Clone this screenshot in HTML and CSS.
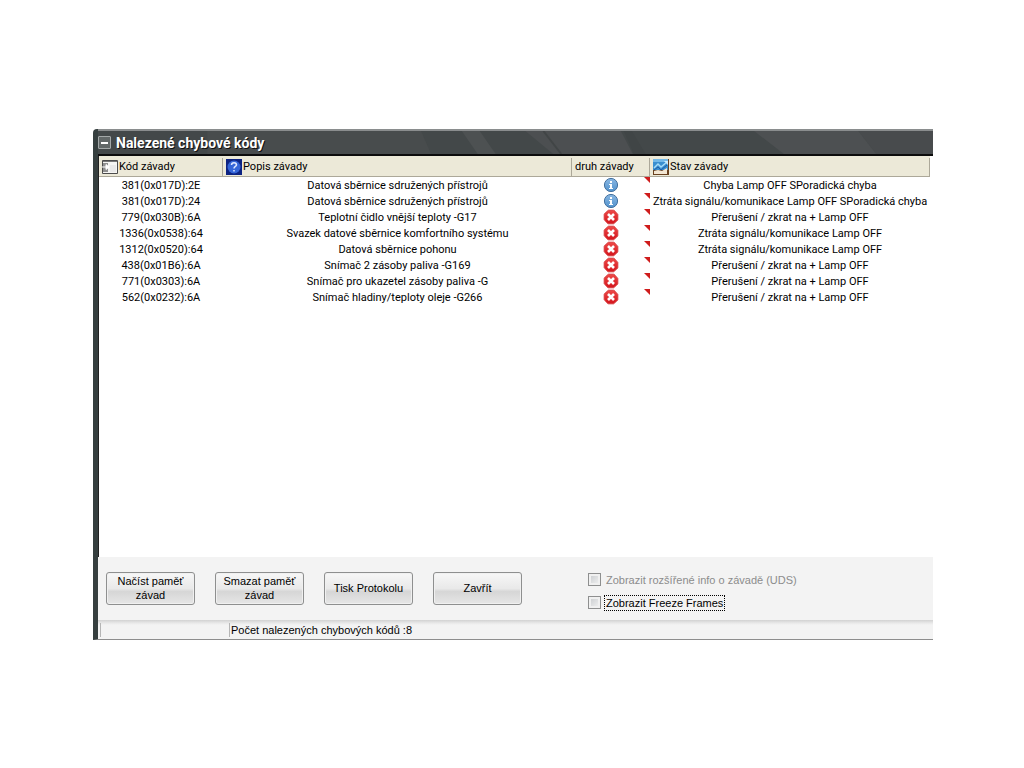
FILE: index.html
```html
<!DOCTYPE html>
<html lang="cs">
<head>
<meta charset="utf-8">
<title>Nalezené chybové kódy</title>
<link rel="stylesheet" href="styles.css">
</head>
<body>
<svg class="defs" width="0" height="0" aria-hidden="true">
  <defs>
    <linearGradient id="blue" x1="0" y1="0" x2="0" y2="1"><stop offset="0" stop-color="#8ab8e4"/><stop offset="1" stop-color="#5292cc"/></linearGradient>
    <linearGradient id="red" x1="0" y1="0" x2="0" y2="1"><stop offset="0" stop-color="#ee4a48"/><stop offset="1" stop-color="#d3141c"/></linearGradient>
    <symbol id="info" viewBox="0 0 16 16">
      <circle cx="8" cy="8" r="6.6" fill="url(#blue)" stroke="#44719f" stroke-width="1"/>
      <path d="M7 4h2v2H7zM6 7h3v4h1v1H6v-1h1V8H6z" fill="#fff"/>
    </symbol>
    <symbol id="error" viewBox="0 0 16 16">
      <path d="M5.500 1.200h5q1 0 4.300 4.300v5q0 1-4.300 4.300h-5q-1 0-4.300-4.300v-5q0-1 4.300-4.300z" fill="url(#red)" stroke="#d8383a" stroke-width="1" stroke-linejoin="round"/>
      <path d="M5 5l6 6M11 5l-6 6" stroke="#fff" stroke-width="2.6"/>
    </symbol>
  </defs>
</svg>
<main class="window">
  <header class="titlebar">
    <button class="sysmenu" type="button" aria-label="Nabídka okna"></button>
    <h1 class="title">Nalezené chybové kódy</h1>
    <svg class="sheen" viewBox="0 0 840 24" preserveAspectRatio="none" aria-hidden="true">
      <path d="M110 0h215l10 24H110z" fill="#484c4d"/>
      <path d="M366 0h18l16 24h-18z" fill="#4d5152"/>
      <path d="M430 0h96l12 24h-80z" fill="#4c4f51"/>
      <path d="M448 0l18 24" stroke="#414546" stroke-width="2"/>
      <path d="M529 0h8l14 24h-12z" fill="#404546"/>
      <path d="M660 0h105l18 24H690z" fill="#4d5052"/>
      <path d="M765 0h75v24h-57z" fill="#484b4d"/>
    </svg>
  </header>
  <section class="list">
    <table class="codes">
      <colgroup><col class="c-code"><col class="c-text"><col class="c-kind"><col class="c-state"></colgroup>
      <thead>
        <tr>
          <th scope="col"><span class="head"><svg class="icon" viewBox="0 0 16 16" aria-hidden="true"><path d="M.5 1.500h15v13H.5z" fill="#f4f4f2" stroke="#4c4c4c"/><path d="M1 2h14v1H1z" fill="#777"/><path d="M1 4h5v9H1z" fill="#8f8f8f"/><path d="M0 8h5M4 5.500v5l3-2.500z" stroke="#fff" fill="#fff"/><path d="M8 6h6v7H8z" fill="#e8e8e8"/></svg>Kód závady</span></th>
          <th scope="col"><span class="head"><svg class="icon" viewBox="0 0 16 16" aria-hidden="true"><path d="M0 0h16v16H0z" fill="#0d2382"/><circle cx="8" cy="8" r="6.500" fill="#3566d8"/><path d="M5.500 6C5.500 3 10.500 3 10.500 6 10.500 7.500 8 7.500 8 9.500M8 11v1.500" fill="none" stroke="#dfe8ff" stroke-width="1.500"/></svg>Popis závady</span></th>
          <th scope="col"><span class="head">druh závady</span></th>
          <th scope="col"><span class="head"><svg class="icon" viewBox="0 0 16 16" aria-hidden="true"><path d="M0 0h16v16H0z" fill="#69401f"/><path d="M0 0h15v11H0z" fill="#3a8fd0"/><path d="M0 0h15v3H0z" fill="#74b9e8"/><path d="M1 12l4-1 4 1 5-3v6H1z" fill="#f3e6d2"/><path d="M1 9l4-4 3 3 6-5" fill="none" stroke="#a5dcf8" stroke-width="1.500"/><path d="M1 11l4-3 3 3 6-5" fill="none" stroke="#1f5fa8" stroke-width="1"/><path d="M11 2h4v4z" fill="#c9ecff"/></svg>Stav závady</span></th>
        </tr>
      </thead>
      <tbody>
        <tr><td>381(0x017D):2E</td><td>Datová sběrnice sdružených přístrojů</td><td class="kind"><svg class="mark" role="img" aria-label="Info"><use href="#info"/></svg></td><td>Chyba Lamp OFF SPoradická chyba</td></tr>
        <tr><td>381(0x017D):24</td><td>Datová sběrnice sdružených přístrojů</td><td class="kind"><svg class="mark" role="img" aria-label="Info"><use href="#info"/></svg></td><td>Ztráta signálu/komunikace Lamp OFF SPoradická chyba</td></tr>
        <tr><td>779(0x030B):6A</td><td>Teplotní čidlo vnější teploty -G17</td><td class="kind"><svg class="mark" role="img" aria-label="Chyba"><use href="#error"/></svg></td><td>Přerušení / zkrat na + Lamp OFF</td></tr>
        <tr><td>1336(0x0538):64</td><td>Svazek datové sběrnice komfortního systému</td><td class="kind"><svg class="mark" role="img" aria-label="Chyba"><use href="#error"/></svg></td><td>Ztráta signálu/komunikace Lamp OFF</td></tr>
        <tr><td>1312(0x0520):64</td><td>Datová sběrnice pohonu</td><td class="kind"><svg class="mark" role="img" aria-label="Chyba"><use href="#error"/></svg></td><td>Ztráta signálu/komunikace Lamp OFF</td></tr>
        <tr><td>438(0x01B6):6A</td><td>Snímač 2 zásoby paliva -G169</td><td class="kind"><svg class="mark" role="img" aria-label="Chyba"><use href="#error"/></svg></td><td>Přerušení / zkrat na + Lamp OFF</td></tr>
        <tr><td>771(0x0303):6A</td><td>Snímač pro ukazetel zásoby paliva -G</td><td class="kind"><svg class="mark" role="img" aria-label="Chyba"><use href="#error"/></svg></td><td>Přerušení / zkrat na + Lamp OFF</td></tr>
        <tr><td>562(0x0232):6A</td><td>Snímač hladiny/teploty oleje -G266</td><td class="kind"><svg class="mark" role="img" aria-label="Chyba"><use href="#error"/></svg></td><td>Přerušení / zkrat na + Lamp OFF</td></tr>
      </tbody>
    </table>
  </section>
  <section class="panel">
    <div class="buttons">
      <button class="btn" type="button">Načíst paměť závad</button>
      <button class="btn" type="button">Smazat paměť závad</button>
      <button class="btn" type="button">Tisk Protokolu</button>
      <button class="btn" type="button">Zavřít</button>
    </div>
    <div class="options">
      <div class="option disabled"><input class="check" type="checkbox" id="uds" disabled><label for="uds">Zobrazit rozšířené info o závadě (UDS)</label></div>
      <div class="option focused"><input class="check" type="checkbox" id="freeze"><label for="freeze">Zobrazit Freeze Frames</label></div>
    </div>
  </section>
  <footer class="status">
    <div class="cell first"></div>
    <div class="cell">Počet nalezených chybových kódů :8</div>
  </footer>
</main>
</body>
</html>
```

FILE: styles.css
```css
* { box-sizing: border-box; }
body {
  margin: 0;
  min-height: 100vh;
  padding: 129px 91px 128px 93px;
  display: flex;
  background: #fff;
  color: #000;
  font: 11px/14px "Liberation Sans", Arial, sans-serif;
}
.defs { position: absolute; }
.window {
  flex: 1;
  min-width: 0;
  display: flex;
  flex-direction: column;
  border-left: 5px solid #363f3f;
  border-bottom: 1px solid #8d8d8d;
  border-top-left-radius: 4px;
  overflow: hidden;
  background: #fff;
}
.titlebar {
  position: relative;
  display: flex;
  align-items: center;
  height: 27px;
  gap: 5px;
  background: #434849;
  border-top: 2px solid #8a8d8e;
  border-bottom: 2px solid #0c0c0c;
}
.sheen { position: absolute; inset: 0; width: 100%; height: 100%; }
.sysmenu {
  position: relative;
  z-index: 1;
  width: 13px;
  height: 13px;
  padding: 0;
  border: 1px solid #a3a8a8;
  border-radius: 1px;
  background: linear-gradient(#fff, #fff) center / 7px 2px no-repeat, #626868;
}
.title {
  position: relative;
  z-index: 1;
  margin: 0;
  color: #fff;
  font: bold 14px/16px Roboto, sans-serif;
  text-shadow: 1px 1px 0 #111;
}
.list {
  flex: 1;
  border-left: 1px solid #222;
  padding-right: 3px;
}
.codes {
  width: 100%;
  table-layout: fixed;
  border-collapse: separate;
  border-spacing: 0;
  font: 11px/15px Roboto, sans-serif;
}
.c-code { width: 124px; }
.c-text { width: 349px; }
.c-kind { width: 78px; }
.codes th {
  height: 21px;
  padding: 1px 0 0;
  font-weight: normal;
  line-height: 17px;
  background: #ece9d8;
  border-bottom: 1px solid #aca899;
}
.head {
  display: flex;
  align-items: center;
  gap: 1px;
  height: 18px;
  padding-left: 3px;
  border-right: 1px solid #aca899;
}
.icon { width: 16px; height: 16px; }
.codes td {
  height: 16px;
  padding: 1px 0 0;
  text-align: center;
  white-space: nowrap;
}
.codes .kind { position: relative; padding: 0; }
.kind::after {
  content: "";
  position: absolute;
  top: 0;
  right: 0;
  width: 6px;
  height: 6px;
  background: #cf1c1c;
  clip-path: polygon(0 0, 100% 0, 100% 100%);
}
.mark { display: block; width: 16px; height: 16px; margin: 0 auto; }
.panel {
  display: flex;
  align-items: center;
  gap: 66px;
  height: 63px;
  padding: 0 8px 1px;
  background: #f3f3f3;
}
.buttons { display: flex; gap: 20px; }
.btn {
  width: 89px;
  height: 33px;
  padding: 0 6px;
  border: 1px solid #8e8f8f;
  border-radius: 3px;
  background: linear-gradient(#f7f7f7, #e9e9e9 50%, #d6d6d6 60%, #e6e6e6);
  box-shadow: inset 0 0 0 1px #f0f0f0;
  color: #000;
  font: inherit;
}
.options { display: flex; flex-direction: column; gap: 7px; padding-top: 6px; }
.option { display: flex; align-items: center; gap: 3px; height: 16px; }
.option label { padding: 0 2px; line-height: 16px; }
.disabled label { color: #8c8c8c; }
.focused label { outline: 1px dotted #000; outline-offset: -1px; }
.check {
  appearance: none;
  width: 13px;
  height: 13px;
  margin: 0;
  border: 1px solid #8e8f8f;
  background: linear-gradient(135deg, #c6c9cc, #f4f4f4);
  box-shadow: inset 0 0 0 2px #f0f0f0;
}
.status {
  display: flex;
  align-items: center;
  height: 19px;
  padding: 0 2px;
  background: linear-gradient(#d2d2d2, #e8e8e8 3px, #f3f3f3 5px);
}
.cell { height: 14px; padding-left: 1px; border-left: 1px solid #b5b5b5; }
.first { width: 129px; }
```
